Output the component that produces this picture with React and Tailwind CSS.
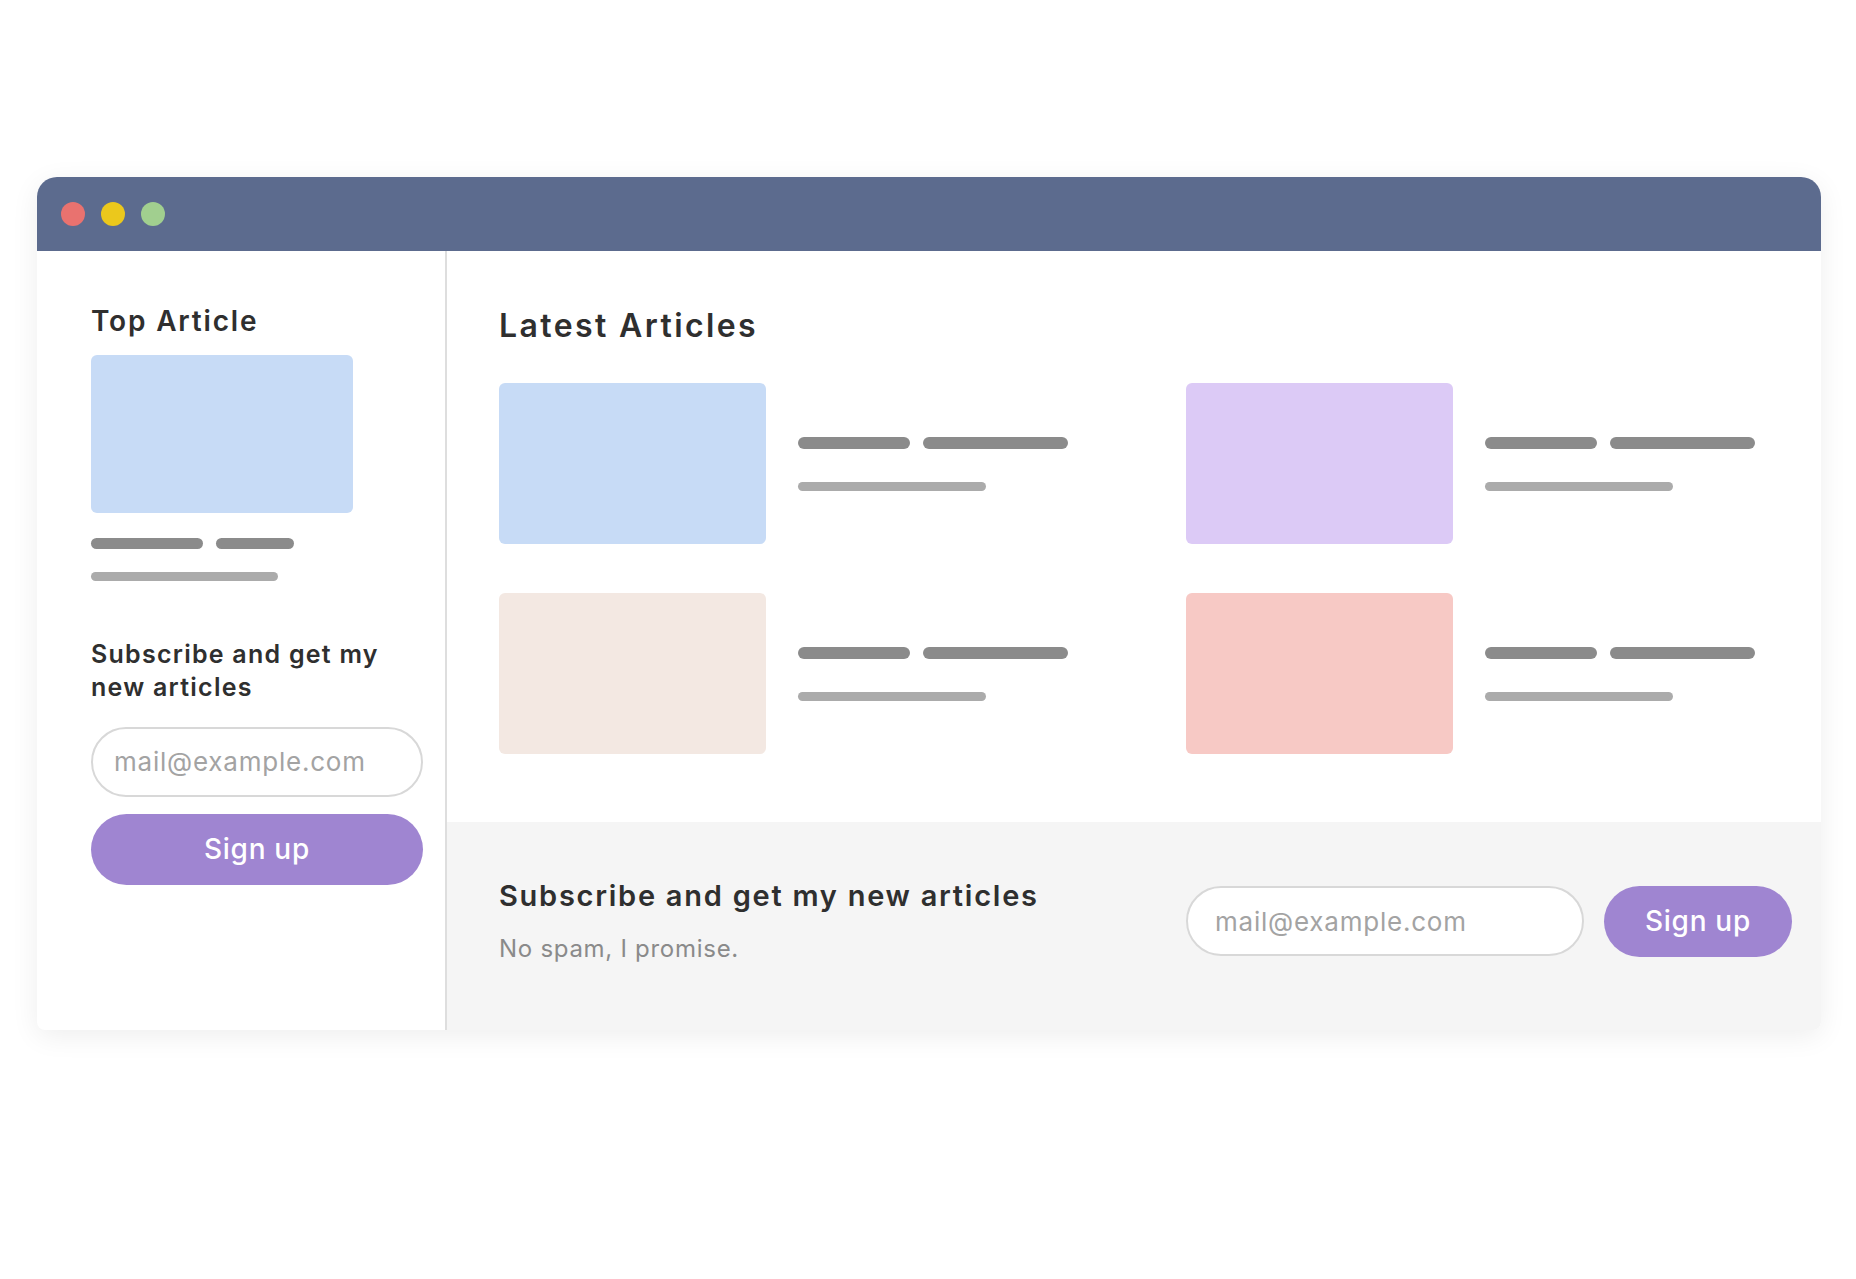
export default function App() {
  const font = { fontFamily: 'Inter, "Noto Sans", sans-serif' };
  const cards = [
    { color: 'bg-[#c7dbf6]' },
    { color: 'bg-[#dccaf6]' },
    { color: 'bg-[#f3e8e2]' },
    { color: 'bg-[#f7c9c5]' },
  ];
  return (
    <div className="min-h-[1279px] w-[1856px] bg-white pt-[177px] pl-[37px]" style={font}>
      <div className="flex h-[853px] w-[1784px] flex-col overflow-hidden rounded-t-[20px] rounded-b-[8px] bg-white shadow-[0_6px_28px_rgba(0,0,0,0.07)]">
        {/* title bar */}
        <div className="flex h-[74px] shrink-0 items-center gap-[16px] bg-[#5c6b8e] pl-[24px]">
          <span className="h-[24px] w-[24px] rounded-full bg-[#e9726f]" />
          <span className="h-[24px] w-[24px] rounded-full bg-[#ebc81c]" />
          <span className="h-[24px] w-[24px] rounded-full bg-[#a1cf8f]" />
        </div>
        <div className="flex flex-1">
          {/* sidebar */}
          <div className="flex w-[410px] shrink-0 flex-col border-r-2 border-[#dedede] pl-[54px] pr-[22px] pt-[54px]">
            <h2 className="text-[28px] font-semibold leading-[1.2] tracking-[0.065em] text-[#2f2f2f]">Top Article</h2>
            <div className="mt-[16px] h-[158px] w-[262px] rounded-[6px] bg-[#c7dbf6]" />
            <div className="mt-[25px] flex gap-[13px]">
              <div className="h-[11px] w-[112px] rounded-full bg-[#8b8b8b]" />
              <div className="h-[11px] w-[78px] rounded-full bg-[#8b8b8b]" />
            </div>
            <div className="mt-[23px] h-[9px] w-[187px] rounded-full bg-[#ababab]" />
            <h3 className="mt-[57px] text-[25px] font-semibold leading-[33px] tracking-[0.05em] text-[#2f2f2f]">
              Subscribe and get my
              <br />
              new articles
            </h3>
            <input
              type="text"
              placeholder="mail@example.com"
              className="mt-[23px] h-[70px] w-[332px] rounded-full border-2 border-[#d8d8d8] bg-white px-[21px] text-[26px] tracking-[0.03em] text-[#333] outline-none placeholder:text-[#a3a3a3]"
            />
            <button className="mt-[17px] h-[71px] w-[332px] rounded-full bg-[#9f85d1] text-[28px] font-medium tracking-[0.025em] text-white">
              Sign up
            </button>
          </div>
          {/* main */}
          <div className="flex flex-1 flex-col">
            <div className="pl-[52px] pr-[52px] pt-[56px] pb-[68px]">
              <h2 className="text-[32px] font-semibold leading-[1.2] tracking-[0.075em] text-[#2f2f2f]">Latest Articles</h2>
              <div className="mt-[38px] grid grid-cols-2 gap-x-[104px] gap-y-[49px]">
                {cards.map((c, i) => (
                  <div key={i} className="flex items-center">
                    <div className={`h-[161px] w-[267px] shrink-0 rounded-[6px] ${c.color}`} />
                    <div className="ml-[32px] flex flex-col">
                      <div className="flex gap-[13px]">
                        <div className="h-[12px] w-[112px] rounded-full bg-[#8b8b8b]" />
                        <div className="h-[12px] w-[145px] rounded-full bg-[#8b8b8b]" />
                      </div>
                      <div className="mt-[33px] h-[9px] w-[188px] rounded-full bg-[#ababab]" />
                    </div>
                  </div>
                ))}
              </div>
            </div>
            <div className="flex flex-1 items-center bg-[#f5f5f5] pb-[10px] pl-[52px]">
              <div className="w-[687px] shrink-0">
                <h3 className="text-[29px] font-semibold leading-[1.2] tracking-[0.06em] text-[#2f2f2f]">
                  Subscribe and get my new articles
                </h3>
                <p className="mt-[21px] text-[24px] leading-[1.2] tracking-[0.03em] text-[#8a8a8a]">No spam, I promise.</p>
              </div>
              <input
                type="text"
                placeholder="mail@example.com"
                className="h-[70px] w-[398px] rounded-full border-2 border-[#d8d8d8] bg-white px-[27px] text-[26px] tracking-[0.03em] text-[#333] outline-none placeholder:text-[#a3a3a3]"
              />
              <button className="ml-[20px] h-[71px] w-[188px] rounded-full bg-[#9f85d1] text-[28px] font-medium tracking-[0.025em] text-white">
                Sign up
              </button>
            </div>
          </div>
        </div>
      </div>
    </div>
  );
}
